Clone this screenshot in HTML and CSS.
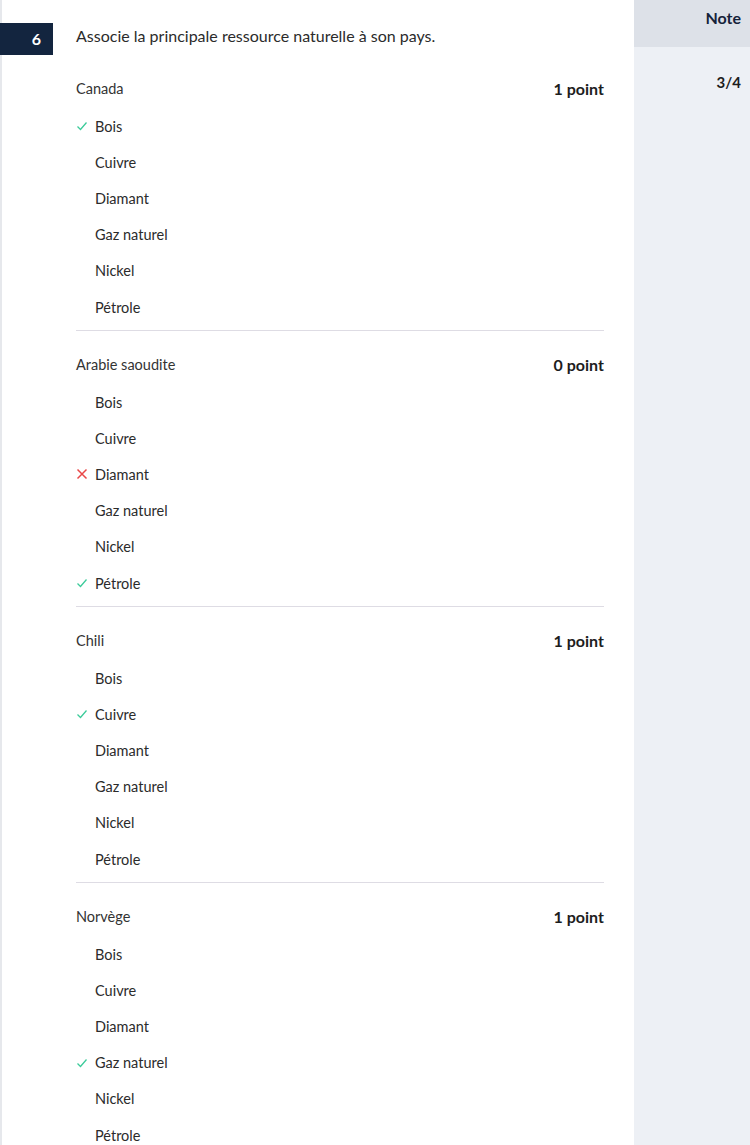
FILE: index.html
```html
<!DOCTYPE html>
<html lang="fr">
<head>
<meta charset="utf-8">
<link rel="stylesheet" href="styles.css">
</head>
<body>
<div class="page">
  <div class="content">
    <div class="header">
      <div class="badge">6</div>
      <div class="question">Associe la principale ressource naturelle à son pays.</div>
    </div>
    <div class="sections">
      <section class="section first">
        <div class="label-row"><span class="label">Canada</span><span class="points">1 point</span></div>
        <ul class="options">
          <li class="option"><span class="icon"><svg viewBox="0 0 12 12" width="12" height="12"><path d="M1.5 6.5 L4.5 9.5 L10.5 2.5" class="ok"/></svg></span>Bois</li>
          <li class="option"><span class="icon"></span>Cuivre</li>
          <li class="option"><span class="icon"></span>Diamant</li>
          <li class="option"><span class="icon"></span>Gaz naturel</li>
          <li class="option"><span class="icon"></span>Nickel</li>
          <li class="option"><span class="icon"></span>Pétrole</li>
        </ul>
      </section>
      <section class="section">
        <div class="label-row"><span class="label">Arabie saoudite</span><span class="points">0 point</span></div>
        <ul class="options">
          <li class="option"><span class="icon"></span>Bois</li>
          <li class="option"><span class="icon"></span>Cuivre</li>
          <li class="option"><span class="icon"><svg viewBox="0 0 12 12" width="12" height="12"><path d="M1.5 1.5 L10.5 10.5 M10.5 1.5 L1.5 10.5" class="ko"/></svg></span>Diamant</li>
          <li class="option"><span class="icon"></span>Gaz naturel</li>
          <li class="option"><span class="icon"></span>Nickel</li>
          <li class="option"><span class="icon"><svg viewBox="0 0 12 12" width="12" height="12"><path d="M1.5 6.5 L4.5 9.5 L10.5 2.5" class="ok"/></svg></span>Pétrole</li>
        </ul>
      </section>
      <section class="section">
        <div class="label-row"><span class="label">Chili</span><span class="points">1 point</span></div>
        <ul class="options">
          <li class="option"><span class="icon"></span>Bois</li>
          <li class="option"><span class="icon"><svg viewBox="0 0 12 12" width="12" height="12"><path d="M1.5 6.5 L4.5 9.5 L10.5 2.5" class="ok"/></svg></span>Cuivre</li>
          <li class="option"><span class="icon"></span>Diamant</li>
          <li class="option"><span class="icon"></span>Gaz naturel</li>
          <li class="option"><span class="icon"></span>Nickel</li>
          <li class="option"><span class="icon"></span>Pétrole</li>
        </ul>
      </section>
      <section class="section">
        <div class="label-row"><span class="label">Norvège</span><span class="points">1 point</span></div>
        <ul class="options">
          <li class="option"><span class="icon"></span>Bois</li>
          <li class="option"><span class="icon"></span>Cuivre</li>
          <li class="option"><span class="icon"></span>Diamant</li>
          <li class="option"><span class="icon"><svg viewBox="0 0 12 12" width="12" height="12"><path d="M1.5 6.5 L4.5 9.5 L10.5 2.5" class="ok"/></svg></span>Gaz naturel</li>
          <li class="option"><span class="icon"></span>Nickel</li>
          <li class="option"><span class="icon"></span>Pétrole</li>
        </ul>
      </section>
    </div>
  </div>
  <aside class="sidebar">
    <div class="side-head">Note</div>
    <div class="side-score">3/4</div>
  </aside>
</div>
</body>
</html>
```
FILE: styles.css
```css
* { box-sizing: border-box; }
html, body { margin: 0; padding: 0; background: #fff; }
body {
  font-family: "Lato", "Liberation Sans", sans-serif;
  color: #2b2b2b;
  overflow: hidden;
}
.page {
  display: flex;
  width: 750px;
  height: 1145px;
}
.content {
  width: 634px;
  border-left: 2px solid #e6e8ec;
  flex-shrink: 0;
}
.header {
  display: flex;
  align-items: flex-start;
  height: 54px;
}
.badge {
  width: 53px;
  height: 32px;
  margin-top: 23px;
  margin-left: -2px;
  background: #13253f;
  color: #fff;
  font-weight: 700;
  font-size: 16px;
  line-height: 32px;
  text-align: right;
  padding-right: 12px;
}
.question {
  margin-left: 23px;
  margin-top: 24px;
  font-size: 16px;
  line-height: 24px;
  color: #2b2b2b;
}
.sections {
  margin-left: 74px;
  width: 528px;
}
.section {
  border-top: 1px solid #dedce4;
  padding-top: 15px;
  padding-bottom: 4.8px;
  height: 276px;
}
.section.first { border-top-color: transparent; }
.label-row {
  display: flex;
  justify-content: space-between;
  align-items: center;
  height: 36px;
}
.label {
  font-size: 14.5px;
  font-weight: 400;
  color: #333;
}
.points {
  font-size: 16px;
  font-weight: 700;
  color: #1d1d1d;
}
.options {
  list-style: none;
  margin: 0;
  padding: 2px 0 0;
}
.option {
  display: flex;
  align-items: center;
  height: 36.2px;
  font-size: 14.5px;
  color: #2b2b2b;
}
.icon {
  width: 19px;
  display: flex;
  align-items: center;
}
.icon svg { display: block; }
.ok { fill: none; stroke: #3ccb9a; stroke-width: 1.3; }
.ko { fill: none; stroke: #e94848; stroke-width: 1.5; }
.sidebar {
  flex: 1;
  background: #edf0f5;
}
.side-head {
  height: 47px;
  background: #dde1e8;
  text-align: right;
  padding: 7px 9px 0 0;
  font-size: 16px;
  font-weight: 700;
  color: #15223a;
  line-height: 22px;
}
.side-score {
  text-align: right;
  padding: 24px 9px 0 0;
  font-size: 15px;
  font-weight: 700;
  color: #1d1d1d;
  line-height: 22px;
}
```
